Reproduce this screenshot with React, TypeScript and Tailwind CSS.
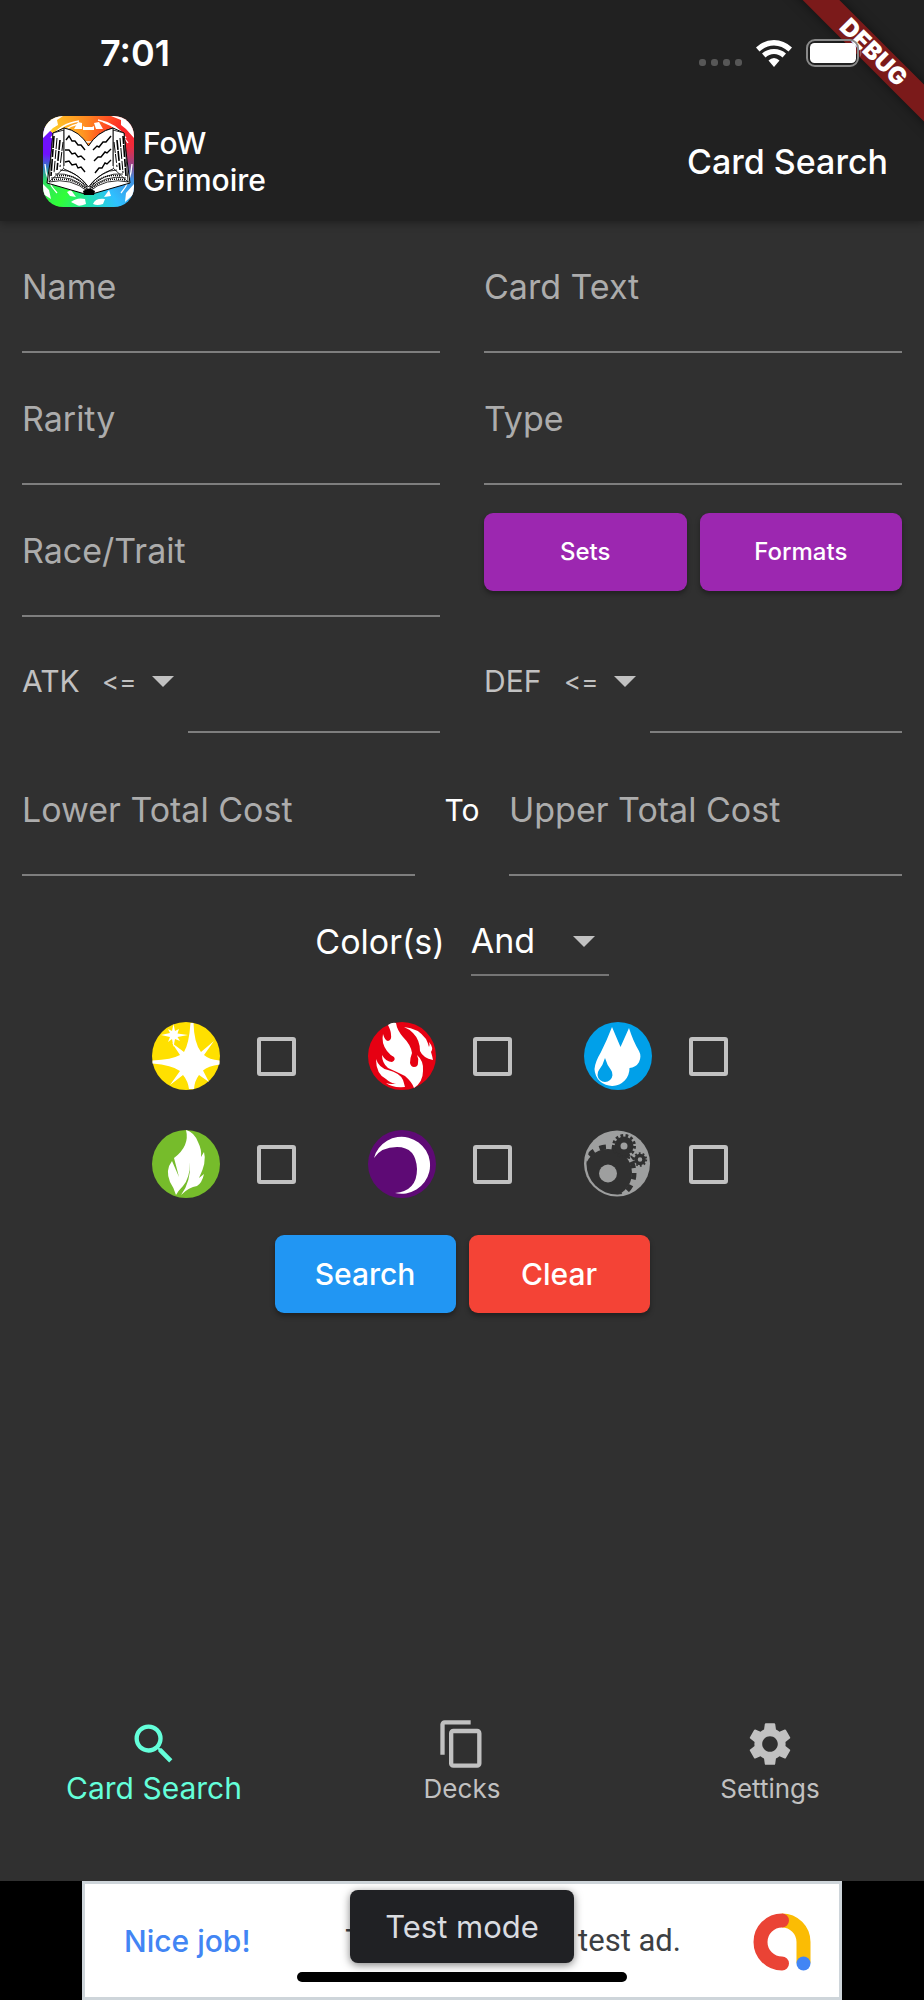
import React from "react";
import { MdContentCopy, MdSearch, MdSettings } from "react-icons/md";

function BookLogo() {
  const stack = [0, 1, 2, 3];
  return (
    <div className="size-[91px] shrink-0 overflow-hidden rounded-[20px] bg-[conic-gradient(#ff8420_0deg,#ff2626_45deg,#f02a3a_70deg,#a04080_92deg,#3f8fe0_112deg,#2fc0ff_145deg,#20e0b0_180deg,#30ff38_215deg,#30e060_245deg,#3080c0_262deg,#7010ff_280deg,#7010ff_308deg,#ffd028_309deg,#ff8420_360deg)]">
      <svg viewBox="0 0 91 91" className="size-full" aria-hidden="true">
        <g fill="#fff">
          <path d="M0 22V10L10 0h10l-6 4 1 5-5 3zM91 22V10L80 0H68l10 4v5l5 4z" />
          <path d="M31 13l4-7 4 1v6zM60 13l-4-7-5 1 2 6zM40 10l2 1h7l2-1v4H40z" />
          <path d="M28 86q6-5 14-3l1 5q-7 3-9 1zM50 88q2-6 12-5l-2 5q-6 2-10 0zM0 68l6 6 2 9-8-5zM91 68l-8 9-1 9 9-8zM24 76l4-2 5 7-6-1zM66 74l2 6-7 1z" />
        </g>
        <g fill="none" stroke="#fff" strokeWidth="1.3">
          <path d="M8 22Q17 8 36 5M12 24Q21 11 35 8M83 22Q74 8 55 4M85 27Q75 11 60 6M2 48Q3 66 14 77M89 48Q88 66 78 77M42 26h8" />
        </g>
        <path d="M10 17L21 12Q36 15 45.500 30Q54 16 70 12L81 17L84 44L87 67L49 78H42L4 67L8 40Z" fill="#fff" stroke="#000" strokeWidth="1" />
        <path d="M10 17L21 14V52L6 66L8 40ZM81 17L70 14V52L85 66L83 40Z" fill="#fff" stroke="#000" strokeWidth="0.800" />
        <g fill="none" stroke="#000">
          {stack.map((i) => (
            <g key={i} strokeWidth={i % 2 ? 1 : 1.6}>
              <path d={`M${11 + i * 3} ${20 + i * 2}L${8 + i * 3} ${60 - i * 3}`} strokeDasharray={`${12 - i} 1 ${8 + i} 2`} />
              <path d={`M${80 - i * 3} ${20 + i * 2}L${83 - i * 3} ${60 - i * 3}`} strokeDasharray={`${8 + i} 1 ${12 - i} 2`} />
            </g>
          ))}
          <path d="M6 66Q28 61 45.500 76Q63 61 86 66M8 62Q29 58 45.500 74Q62 58 83 62M12 58Q31 56 45.500 73Q61 56 80 58M17 54Q33 54 45.500 71Q59 54 74 54" strokeWidth="0.800" />
          <path d="M9 64Q29 60 44 74M82 64Q62 60 47 74M14 60Q31 57 44 71M77 60Q60 57 47 71" strokeWidth="1.500" strokeDasharray="1 1" />
        </g>
        <path d="M21 12Q37 15 45.500 30V71Q36 57 21 52ZM70 12Q54 16 45.500 30V71Q55 57 70 52Z" fill="#fff" />
        <path d="M21 12V50M21 12Q37 15 45.500 30Q54 16 70 12V50M21 53Q37 59 45.500 71Q54 59 70 53" fill="none" stroke="#000" strokeWidth="0.900" />
        <g fill="none" stroke="#000" strokeWidth="1.400">
          <path d="M23 24l3-4 3 5 3 0 3 4 3 0 4 5M22 34l4 0 3 4 3-1 3 4 3-1 4 4M22 46l4-1 3 4 4-1 2 4 3-1 4 5" />
          <path d="M50 34l4-4 2 1 4-5 3 0 5-6M51 45l4-4 3 0 4-5 2 1 4-4M52 57l4-5 3 0 3-5 2 1 4-4" />
        </g>
        <path d="M40 75l4-2h4l4 2-1 4H41z" fill="#000" />
      </svg>
    </div>
  );
}

function LightIcon() {
  return (
    <svg viewBox="0 0 68 68" className="size-full" aria-hidden="true">
      <circle cx="34" cy="34" r="34" fill="#ffe000" />
      <path d="M38.500 1H41.500Q42 21 49 30L62 19L52 33Q57 37.500 67.500 38.500V42.500Q56 44 51 48.500L57 60L47 53Q42.500 59 42 67H37Q36 59 31 53L18 63L28 49Q20 43 0.500 41.500V38.500Q20 37.500 28 33L20 21L32 30Q37 22 38.500 1Z" fill="#fff" />
      <path d="M21.500 2L23 9L27 7L25.500 11.500L36 13L25.500 15L28 19L23 17L21.500 25L20 17L16 20L18 15L9 13L18 11L16 7L20 9Z" fill="#fff" />
    </svg>
  );
}

function FireIcon() {
  return (
    <svg viewBox="0 0 68 68" className="size-full" aria-hidden="true">
      <circle cx="34" cy="34" r="34" fill="#e60012" />
      <g fill="#fff">
        <path d="M20 3Q24 0 28 1Q29 8 35 15Q43 23 44 31Q42 36 42 41Q43 45 46 45Q50 45 50 41Q51 37 49 33Q56 39 55 49Q55 60 46 66Q44 60 37 54Q29 50 20 46Q14 41 14 33Q18 40 24 40Q28 38 26 35Q22 33 19 29Q13 21 15 12Q17 19 20 19Q24 18 23 13Q23 9 20 3Z" />
        <path d="M36 5Q50 6 58 17Q60 21 61 25Q62 23 61 20Q66 26 63 30Q64 33 65 38Q55 36 52 29Q52 18 45 11Q41 7 36 5Z" />
        <path d="M8 37Q11 46 20 48Q32 51 35 58Q36 61 37 65Q24 66 18 61Q24 63 28 61Q23 62 18 57Q8 52 8 37Z" />
      </g>
    </svg>
  );
}

function WaterIcon() {
  return (
    <svg viewBox="0 0 68 68" className="size-full" aria-hidden="true">
      <circle cx="34" cy="34" r="34" fill="#00a0e9" />
      <path d="M28 5L36.500 25L45 6Q49 19 55 29A11.500 11.500 0 0 1 45.500 46A17.500 17.500 0 0 1 10.500 47Q11 40 17 30Q23 18 28 5Z" fill="#fff" />
      <path d="M21 36Q23 43 27 48A7.500 7.500 0 1 1 15 48Q19 43 21 36Z" fill="#00a0e9" />
    </svg>
  );
}

function WindIcon() {
  return (
    <svg viewBox="0 0 68 68" className="size-full" aria-hidden="true">
      <circle cx="34" cy="34" r="34" fill="#76bc2b" />
      <path d="M34 0Q42 2 46 12Q50 20 49 27L52 22Q55 32 47 48L52 44Q50 53 45 56Q37 57 29 65Q39 52 38 32Q38 48 31 56Q26 61 24 65Q22 58 18 52Q13 40 20 31L27 47L22 28Q38 16 34 0Z" fill="#fff" />
    </svg>
  );
}

function DarknessIcon() {
  return (
    <svg viewBox="0 0 68 68" className="size-full" aria-hidden="true">
      <circle cx="34" cy="34" r="34" fill="#5e0a75" />
      <path d="M6 28A28.500 28.500 0 1 1 27 63Q49 61 49 39Q48 17 29 17Q13 17 6 28Z" fill="#fff" />
    </svg>
  );
}

function VoidIcon() {
  return (
    <svg viewBox="0 0 68 68" className="size-full" aria-hidden="true">
      <clipPath id="void-disc">
        <circle cx="33" cy="34" r="30.500" />
      </clipPath>
      <circle cx="33" cy="33.500" r="33" fill="#9e9f9f" />
      <g clipPath="url(#void-disc)">
        <circle cx="24" cy="43" r="24" fill="#303030" />
        <circle cx="24" cy="43" r="26" fill="none" stroke="#303030" strokeWidth="5" strokeDasharray="6.560 6" />
      </g>
      <g fill="none" stroke="#303030">
        <circle cx="40" cy="16" r="6.500" strokeWidth="6" />
        <circle cx="40" cy="16" r="10.500" strokeWidth="3" strokeDasharray="2.700 2.370" />
        <circle cx="56" cy="29.500" r="4" strokeWidth="3.500" />
        <circle cx="56" cy="29.500" r="6.200" strokeWidth="2" strokeDasharray="1.800 2.090" />
      </g>
      <path d="M41 27l5 1M47 26l3 4" stroke="#303030" strokeWidth="2" />
      <circle cx="24" cy="43.500" r="9" fill="#9e9f9f" />
    </svg>
  );
}

function AdLogo() {
  return (
    <svg viewBox="0 0 58 58" className="size-[58px] shrink-0" aria-hidden="true">
      <path d="M29 7.500A21.500 21.500 0 0 1 50.500 29V50" fill="none" stroke="#fbbc04" strokeWidth="14" />
      <path d="M29 7.500A21.500 21.500 0 0 0 29 50.500" fill="none" stroke="#ea4335" strokeWidth="14" strokeLinecap="round" />
      <circle cx="50.500" cy="50.500" r="7" fill="#4285f4" />
    </svg>
  );
}

function StatusBar() {
  return (
    <div className="flex h-[106px] items-center justify-between pr-[62px] pl-[100px]">
      <span className="text-[36px] leading-none font-semibold">7:01</span>
      <div className="relative z-20 flex items-center">
        <div className="mt-[19px] mr-[14px] flex gap-[5px]">
          <i className="size-[7px] rounded-[3px] bg-[#575757]" />
          <i className="size-[7px] rounded-[3px] bg-[#575757]" />
          <i className="size-[7px] rounded-[3px] bg-[#575757]" />
          <i className="size-[7px] rounded-[3px] bg-[#575757]" />
        </div>
        <svg viewBox="0 0 36 27" className="mr-[14px] h-[27px] w-9" fill="#fff" aria-label="Wi-Fi">
          <path d="M0 7.500Q8 0 18 0T36 7.500L32.500 11.500Q26 5.500 18 5.500T3.500 11.500Z" />
          <path d="M6 13.500Q11 9 18 9T30 13.500L26.500 17.500Q23 14 18 14T9.500 17.500Z" />
          <path d="M12.500 20.500Q15 18 18 18T23.500 20.500L18 27Z" />
        </svg>
        <svg viewBox="0 0 56 28" className="h-7 w-14" aria-label="Battery">
          <rect x="1" y="1" width="51" height="26" rx="8" fill="none" stroke="#8a8a8a" strokeWidth="2" />
          <rect x="4" y="4" width="46" height="20" rx="4.500" fill="#fff" />
          <path d="M54 10q3 4 0 8z" fill="#a05a5a" />
        </svg>
      </div>
    </div>
  );
}

function DebugRibbon() {
  return (
    <div className="pointer-events-none absolute top-0 right-0 size-[160px] overflow-hidden">
      <div className="absolute top-[38px] -right-[58px] flex h-[26px] w-[220px] rotate-45 items-center justify-center bg-[#7b1a1a] pl-1 text-[24px] leading-none font-black shadow-[0_0_12px_rgba(0,0,0,0.5)]">
        DEBUG
      </div>
    </div>
  );
}

function Field({ label }: { label: string }) {
  return (
    <input
      type="text"
      aria-label={label}
      placeholder={label}
      className="h-[132px] w-full min-w-0 border-b-2 border-[#7e7e7e] bg-transparent text-[34px] outline-none placeholder:text-[#acacac] placeholder:opacity-100"
    />
  );
}

function Caret() {
  return (
    <svg viewBox="0 0 22 11" className="h-[11px] w-[22px]" fill="#c1c1c1" aria-hidden="true">
      <path d="M0 0h22L11 11z" />
    </svg>
  );
}

function StatField({ label }: { label: string }) {
  const id = `${label.toLowerCase()}-value`;
  return (
    <div className="flex h-[116px] items-center">
      <label htmlFor={id} className="mt-3 w-[80px] text-[30px] text-[#c1c1c1]">
        {label}
      </label>
      <div className="relative mt-3 flex items-center">
        <select
          aria-label={`${label} comparison`}
          className="h-[58px] w-[72px] appearance-none bg-transparent text-[26px] text-[#c1c1c1] outline-none [font-feature-settings:'calt'_0]"
        >
          <option>&lt;=</option>
          <option>=</option>
          <option>&gt;=</option>
        </select>
        <span className="pointer-events-none absolute right-0">
          <Caret />
        </span>
      </div>
      <input id={id} type="text" className="ml-[14px] h-full min-w-0 flex-1 border-b-2 border-[#7e7e7e] bg-transparent text-[34px] outline-none" />
    </div>
  );
}

const attributes = [
  { name: "Light", Icon: LightIcon },
  { name: "Fire", Icon: FireIcon },
  { name: "Water", Icon: WaterIcon },
  { name: "Wind", Icon: WindIcon },
  { name: "Darkness", Icon: DarknessIcon },
  { name: "Void", Icon: VoidIcon },
];

function ColorPicker() {
  return (
    <div className="mt-[46px] grid grid-cols-[repeat(3,216px)] justify-center gap-y-10">
      {attributes.map(({ name, Icon }) => (
        <label key={name} className="flex items-center gap-[37px] pl-[14px]">
          <span className="size-[68px]">
            <Icon />
          </span>
          <input
            type="checkbox"
            aria-label={name}
            className="size-[39px] appearance-none rounded-[3px] border-4 border-[#c1c1c1] checked:bg-[#64ffda]"
          />
        </label>
      ))}
    </div>
  );
}

const buttonBase = "h-[78px] rounded-[9px] font-medium text-white shadow-[0_3px_5px_rgba(0,0,0,0.35)]";

export default function App() {
  return (
    <div className="relative flex min-h-screen flex-col overflow-hidden bg-[#303030] font-['Inter','Liberation_Sans',sans-serif] text-white">
      <header className="h-[221px] bg-[#212121] shadow-[0_2px_8px_rgba(0,0,0,0.35)]">
        <DebugRibbon />
        <StatusBar />
        <div className="flex items-center justify-between pt-[10px] pr-9 pl-[43px]">
          <div className="flex items-center gap-[9px]">
            <BookLogo />
            <p className="text-[30px] leading-[37px] font-medium">
              FoW
              <br />
              Grimoire
            </p>
          </div>
          <h1 className="text-[34px] font-medium">Card Search</h1>
        </div>
      </header>

      <main className="px-[22px]">
        <div className="grid grid-cols-2 gap-x-11">
          <Field label="Name" />
          <Field label="Card Text" />
          <Field label="Rarity" />
          <Field label="Type" />
          <Field label="Race/Trait" />
          <div className="flex gap-[13px] pt-7">
            <button type="button" className={`${buttonBase} flex-1 bg-[#9c27b0] text-[24px]`}>
              Sets
            </button>
            <button type="button" className={`${buttonBase} flex-1 bg-[#9c27b0] text-[24px]`}>
              Formats
            </button>
          </div>
          <StatField label="ATK" />
          <StatField label="DEF" />
        </div>

        <div className="mt-[11px] flex items-center">
          <Field label="Lower Total Cost" />
          <span className="w-[94px] shrink-0 text-center text-[30px]">To</span>
          <Field label="Upper Total Cost" />
        </div>

        <div className="mt-[30px] flex items-center justify-center gap-[26px]">
          <label htmlFor="color-mode" className="text-[34px]">
            Color(s)
          </label>
          <div className="relative flex items-center">
            <select id="color-mode" className="h-[70px] w-[138px] appearance-none border-b-2 border-[#757575] bg-transparent text-[34px] outline-none">
              <option>And</option>
              <option>Or</option>
            </select>
            <span className="pointer-events-none absolute right-[14px]">
              <Caret />
            </span>
          </div>
        </div>

        <ColorPicker />

        <div className="mt-[37px] flex justify-center gap-[13px]">
          <button type="button" className={`${buttonBase} w-[181px] bg-[#2196f3] text-[30px]`}>
            Search
          </button>
          <button type="button" className={`${buttonBase} w-[181px] bg-[#f44336] text-[30px]`}>
            Clear
          </button>
        </div>
      </main>

      <nav className="mt-auto grid grid-cols-3 pb-[73px] text-[26px] text-[#c1c1c1]">
        <a href="#search" className="flex flex-col items-center text-[30px] leading-9 text-[#64ffda]">
          <MdSearch className="size-[52px]" />
          Card Search
        </a>
        <a href="#decks" className="flex flex-col items-center leading-[38px]">
          <MdContentCopy className="size-[52px]" />
          Decks
        </a>
        <a href="#settings" className="flex flex-col items-center leading-[38px]">
          <MdSettings className="size-[52px]" />
          Settings
        </a>
      </nav>

      <footer className="relative flex justify-center bg-black">
        <div className="flex h-[119px] w-[760px] items-center border-[3px] border-[#ced5da] bg-white pt-[2px] pr-7 pl-[39px] text-[30px] text-[#3c4043]">
          <span className="font-medium text-[#4285f4]">Nice job!</span>
          <span className="flex-1 pr-[72px] text-right font-['Roboto',sans-serif] text-[31px] whitespace-nowrap">
            This is a 320x50 test ad.
          </span>
          <AdLogo />
        </div>
        <div className="absolute top-[9px] flex h-[73px] w-[224px] items-center justify-center rounded-[8px] bg-[#202124] pt-[2px] text-[31px] text-[#dadce0] shadow-[0_2px_8px_rgba(0,0,0,0.5)]">
          Test mode
        </div>
        <div className="absolute bottom-[18px] h-[10px] w-[330px] rounded-full bg-black" />
      </footer>
    </div>
  );
}
